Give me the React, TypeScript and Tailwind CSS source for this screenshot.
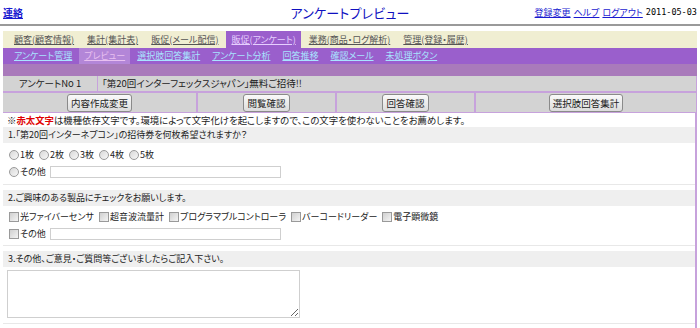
import React from "react";

const tabs = [
  "顧客(顧客情報)",
  "集計(集計表)",
  "販促(メール配信)",
  "販促(アンケート)",
  "業務(商品・ログ解析)",
  "管理(登録・履歴)",
];

const subTabs = [
  "アンケート管理",
  "プレビュー",
  "選択肢回答集計",
  "アンケート分析",
  "回答推移",
  "確認メール",
  "未処理ボタン",
];

const products = [
  "光ファイバーセンサ",
  "超音波流量計",
  "プログラマブルコントローラ",
  "バーコードリーダー",
  "電子顕微鏡",
];

function Radio() {
  return (
    <span className="inline-block w-[10px] h-[10px] rounded-full border border-[#9a9a9a] bg-gradient-to-br from-[#d8d8d8] to-[#f8f8f8] mr-[1px]" />
  );
}

function Check() {
  return (
    <span className="inline-block w-[10px] h-[10px] border border-[#9a9a9a] bg-gradient-to-br from-[#d0d0d0] to-[#f4f4f4] mr-[1px]" />
  );
}

function Btn({ label }: { label: string }) {
  return (
    <button className="h-[18px] px-[3px] border border-[#8a8a8a] rounded-[3px] bg-gradient-to-b from-[#fafafa] to-[#dcdcdc] text-[9.5px] leading-[16px] text-[#222]">
      {label}
    </button>
  );
}

export default function App() {
  return (
    <div className="w-[700px] h-[328px] overflow-hidden bg-white text-[#222] font-['Noto_Sans_CJK_JP',sans-serif] [font-feature-settings:'palt']">
      {/* top bar */}
      <div className="h-[23px] flex items-center justify-between px-[3px] pt-[2px]">
        <a className="text-[10px] font-bold text-[#1a1ad0] underline w-[170px]">連絡</a>
        <div className="text-[13px] text-[#1010c0] tracking-[0.2px]">アンケートプレビュー</div>
        <div className="w-[170px] flex justify-end items-center gap-[3px] text-[9px] whitespace-nowrap">
          <a className="text-[#1a1ad0] underline">登録変更</a>
          <a className="text-[#1a1ad0] underline">ヘルプ</a>
          <a className="text-[#1a1ad0] underline">ログアウト</a>
          <span className="font-['DejaVu_Sans_Mono',monospace] text-[8.5px] text-black">2011-05-03</span>
        </div>
      </div>
      <div className="h-[2px] bg-[#9a9a9a] mt-[1px]" />

      <div className="mx-[3px] mt-[5px]">
        {/* main tabs */}
        <div className="h-[17px] bg-[#f0eed2] flex items-stretch pl-[6px] gap-[3px] text-[9px] whitespace-nowrap">
          {tabs.map((t) => (
            <a
              key={t}
              className={
                t === "販促(アンケート)"
                  ? "px-[5px] flex items-center bg-[#9a5fcc] text-[#e6cfff] underline"
                  : "px-[5px] flex items-center text-[#555] underline"
              }
            >
              {t}
            </a>
          ))}
        </div>

        {/* sub tabs */}
        <div className="h-[16px] bg-[#9a5fcc] flex items-stretch pl-[6px] gap-[2px] text-[9px] whitespace-nowrap">
          {subTabs.map((t) => (
            <a
              key={t}
              className={
                t === "プレビュー"
                  ? "px-[5px] flex items-center bg-[#b386d8] text-[#e8c0f0] underline"
                  : "px-[5px] flex items-center text-[#a8e4ff] underline"
              }
            >
              {t}
            </a>
          ))}
        </div>
        <div className="h-[12px] bg-[#a97abb]" />

        {/* info table */}
        <div className="flex h-[15px] bg-[#d3d3d3] text-[9.5px] border-r border-[#c7a2dc]">
          <div className="w-[95px] flex items-center justify-center border-r border-[#c7a2dc]">
            アンケートNo 1
          </div>
          <div className="flex-1 flex items-center pl-[4px]">
            「第20回インターフェックスジャパン」無料ご招待!!
          </div>
        </div>
        <div className="flex h-[22px] bg-[#d3d3d3] border-t-2 border-b border-[#c7a2dc] border-r">
          <div className="w-[195px] flex items-center justify-center border-r-2 border-[#c7a2dc]">
            <Btn label="内容作成変更" />
          </div>
          <div className="w-[139px] flex items-center justify-center border-r-2 border-[#c7a2dc]">
            <Btn label="閲覧確認" />
          </div>
          <div className="w-[139px] flex items-center justify-center border-r-2 border-[#c7a2dc]">
            <Btn label="回答確認" />
          </div>
          <div className="flex-1 flex items-center justify-center">
            <Btn label="選択肢回答集計" />
          </div>
        </div>

        {/* questions */}
        <div className="border-r-2 border-[#c7a2dc] h-[220px] text-[9px]">
          <div className="h-[15px] leading-[15px] pl-[4px] text-[9.4px]">
            ※<span className="text-[#e00000] font-bold">赤太文字</span>
            は機種依存文字です。環境によって文字化けを起こしますので、この文字を使わないことをお薦めします。
          </div>

          <div className="mt-[-1px]">
            <div className="h-[16px] leading-[16px] bg-[#efefef] pl-[5px]">
              1.「第20回インターネプコン」の招待券を何枚希望されますか？
            </div>
            <div className="pl-[6px] pt-[6px] pb-[6px] border-b border-[#e8e8e8] flex flex-col gap-[5px]">
              <div className="h-[12px] flex items-center gap-[5px]">
                {["1枚", "2枚", "3枚", "4枚", "5枚"].map((n) => (
                  <label key={n} className="flex items-center">
                    <Radio />
                    {n}
                  </label>
                ))}
              </div>
              <div className="h-[12px] flex items-center">
                <Radio />
                <span className="w-[30px]">その他</span>
                <input className="w-[231px] h-[12px] border border-[#cfcfcf] outline-none" />
              </div>
            </div>
          </div>

          <div className="mt-[5px]">
            <div className="h-[16px] leading-[16px] bg-[#efefef] pl-[5px]">
              2.ご興味のある製品にチェックをお願いします。
            </div>
            <div className="pl-[6px] pt-[5px] pb-[5px] border-b border-[#e8e8e8] flex flex-col gap-[5px]">
              <div className="h-[12px] flex items-center gap-[5px]">
                {products.map((p) => (
                  <label key={p} className="flex items-center">
                    <Check />
                    {p}
                  </label>
                ))}
              </div>
              <div className="h-[12px] flex items-center">
                <Check />
                <span className="w-[30px]">その他</span>
                <input className="w-[231px] h-[12px] border border-[#cfcfcf] outline-none" />
              </div>
            </div>
          </div>

          <div className="mt-[5px]">
            <div className="h-[16px] leading-[16px] bg-[#efefef] pl-[5px]">
              3.その他、ご意見・ご質問等ございましたらご記入下さい。
            </div>
            <div className="pl-[4px] pt-[3px] pb-[5px] border-b border-[#e8e8e8]">
              <textarea className="block w-[293px] h-[48px] border border-[#cfcfcf] outline-none resize" />
            </div>
          </div>
        </div>
      </div>
    </div>
  );
}
